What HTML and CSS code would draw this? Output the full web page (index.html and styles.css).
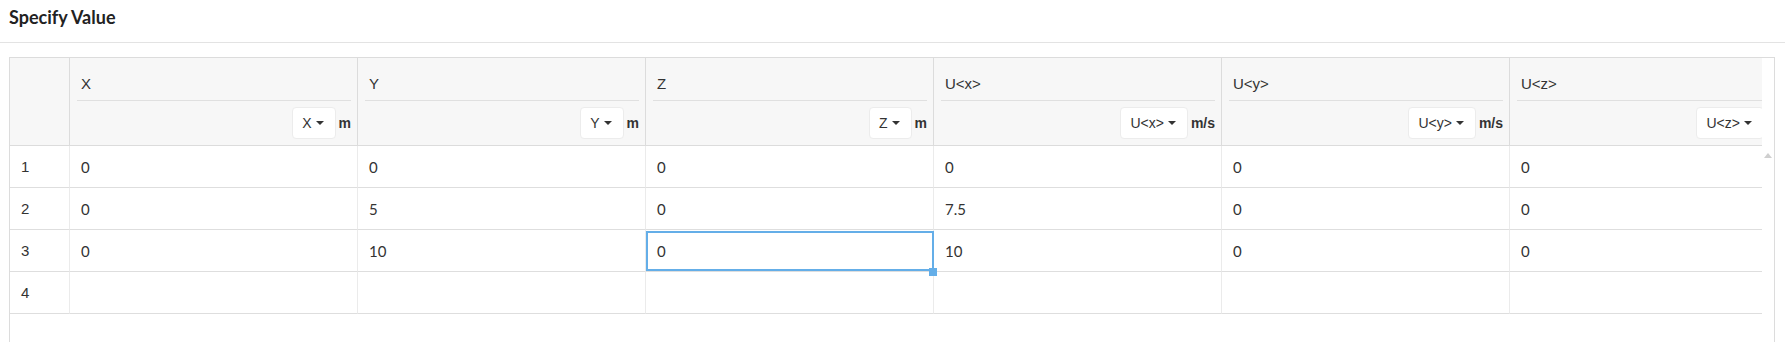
FILE: index.html
```html
<!DOCTYPE html>
<html>
<head>
<meta charset="utf-8">
<link rel="stylesheet" href="styles.css">
</head>
<body>
<div class="title-bar"><h1>Specify Value</h1></div>
<div class="panel">
  <div class="viewport">
    <div class="grid">
      <div class="hcell corner"></div>
      <div class="hcell">
        <div class="hlabel">X</div>
        <div class="hunits"><span class="dd">X<i class="caret"></i></span><span class="unit">m</span></div>
      </div>
      <div class="hcell">
        <div class="hlabel">Y</div>
        <div class="hunits"><span class="dd">Y<i class="caret"></i></span><span class="unit">m</span></div>
      </div>
      <div class="hcell">
        <div class="hlabel">Z</div>
        <div class="hunits"><span class="dd">Z<i class="caret"></i></span><span class="unit">m</span></div>
      </div>
      <div class="hcell">
        <div class="hlabel">U&lt;x&gt;</div>
        <div class="hunits"><span class="dd">U&lt;x&gt;<i class="caret"></i></span><span class="unit">m/s</span></div>
      </div>
      <div class="hcell">
        <div class="hlabel">U&lt;y&gt;</div>
        <div class="hunits"><span class="dd">U&lt;y&gt;<i class="caret"></i></span><span class="unit">m/s</span></div>
      </div>
      <div class="hcell">
        <div class="hlabel">U&lt;z&gt;</div>
        <div class="hunits"><span class="dd">U&lt;z&gt;<i class="caret"></i></span><span class="unit">m/s</span></div>
      </div>

      <div class="rn">1</div><div class="cell">0</div><div class="cell">0</div><div class="cell">0</div><div class="cell">0</div><div class="cell">0</div><div class="cell">0</div>
      <div class="rn">2</div><div class="cell">0</div><div class="cell">5</div><div class="cell">0</div><div class="cell">7.5</div><div class="cell">0</div><div class="cell">0</div>
      <div class="rn">3</div><div class="cell">0</div><div class="cell">10</div><div class="cell selected">0<span class="sel"><span class="handle"></span></span></div><div class="cell">10</div><div class="cell">0</div><div class="cell">0</div>
      <div class="rn">4</div><div class="cell"></div><div class="cell"></div><div class="cell"></div><div class="cell"></div><div class="cell"></div><div class="cell"></div>
    </div>
  </div>
  <div class="scrollbar"><i class="arrow-up"></i></div>
</div>
</body>
</html>
```

FILE: styles.css
```css
* { box-sizing: border-box; }
html, body { margin: 0; padding: 0; background: #fff; }
body {
  font-family: "Liberation Sans", Arial, sans-serif;
  color: #333;
  overflow: hidden;
  width: 1785px;
  height: 342px;
}
.title-bar {
  height: 43px;
  border-bottom: 1px solid #e3e3e3;
  padding: 6px 0 0 9px;
}
.title-bar h1 {
  margin: 0;
  font-family: Lato, "Liberation Sans", sans-serif;
  font-weight: 700;
  font-size: 18px;
  line-height: 22px;
  color: #222;
}
.panel {
  margin: 14px 10px 0 9px;
  height: 300px;
  border: 1px solid #dcdcdc;
  border-bottom: none;
  display: flex;
}
.viewport {
  width: 1752px;
  overflow: hidden;
}
.scrollbar {
  width: 12px;
  display: flex;
  justify-content: center;
  padding-top: 95px;
}
.arrow-up {
  display: block;
  width: 0;
  height: 0;
  border-left: 4px solid transparent;
  border-right: 4px solid transparent;
  border-bottom: 5px solid #cfcfcf;
}
.grid {
  display: grid;
  grid-template-columns: 59px repeat(6, 288px);
  width: 1787px;
}
.hcell {
  background: #f7f7f7;
  border-left: 1px solid #dcdcdc;
  border-bottom: 1px solid #dcdcdc;
  padding: 0 6px 0 7px;
  height: 88px;
}
.hcell.corner { border-left: none; }
.hlabel {
  height: 43px;
  border-bottom: 1px solid #e0e0e0;
  padding: 18px 0 0 4px;
  font-size: 15px;
  line-height: 16px;
}
.hunits {
  height: 43px;
  display: flex;
  justify-content: flex-end;
  align-items: center;
  gap: 3px;
}
.dd {
  height: 32px;
  background: #fff;
  border: 1px solid #ececec;
  border-radius: 4px;
  display: flex;
  align-items: center;
  padding: 0 11px 0 9px;
  font-size: 14px;
  gap: 4px;
}
.caret {
  display: block;
  width: 0;
  height: 0;
  border-left: 4px solid transparent;
  border-right: 4px solid transparent;
  border-top: 4px solid #333;
}
.unit {
  font-size: 14px;
  font-weight: 700;
}
.rn, .cell {
  height: 42px;
  border-bottom: 1px solid #dedede;
  display: flex;
  align-items: center;
  padding-left: 11px;
}
.rn {
  font-size: 15px;
}
.cell {
  border-left: 1px solid #ebebeb;
  font-family: Lato, "Liberation Sans", sans-serif;
  font-size: 15px;
  position: relative;
}
.cell.selected { z-index: 2; }
.sel {
  position: absolute;
  left: 0;
  top: 1px;
  width: 288px;
  height: 40px;
  border: 2px solid #64aee8;
}
.handle {
  position: absolute;
  right: -5px;
  bottom: -7px;
  width: 8px;
  height: 8px;
  background: #64aee8;
}
```
